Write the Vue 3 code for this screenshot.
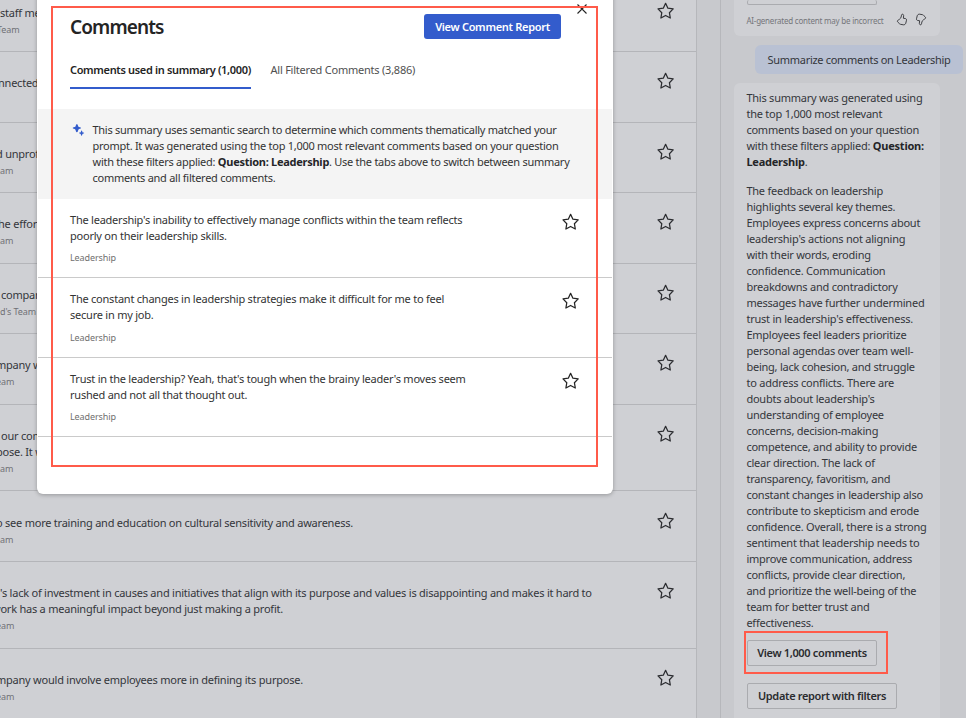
<script setup>
import { h } from 'vue'

const Star = () =>
  h('svg', { class: 'star', viewBox: '0 0 18 18', width: 18, height: 18 }, [
    h('path', {
      d: 'M8.6 1.3 L10.9 6.2 L16.2 6.9 L12.4 10.7 L13.3 16 L8.6 13.5 L3.900 16 L4.800 10.7 L1 6.9 L6.300 6.2 Z',
      fill: 'none',
      stroke: 'currentColor',
      'stroke-width': 1.25,
      'stroke-linejoin': 'round',
    }),
  ])

const rows = [
  { height: 71, lines: [['staff meetings', 0]], team: ['Team', -3] },
  { height: 71, lines: [['nnected', -2]], team: ['', 0] },
  { height: 70, lines: [['d unprofessional', -4]], team: ['eam', -5] },
  { height: 71, lines: [['he effort', -2]], team: ['eam', -5] },
  { height: 70, lines: [['company', 1]], team: ["d's Team", 0] },
  { height: 71, lines: [['mpany would', -4]], team: ['eam', -4] },
  { height: 86, lines: [['our company', 1], ['pose. It would', -4]], team: ['eam', -5] },
  { height: 71, lines: [['o see more training and education on cultural sensitivity and awareness.', -4]], team: ['eam', -5] },
  {
    height: 87,
    lines: [
      ["'s lack of investment in causes and initiatives that align with its purpose and values is disappointing and makes it hard to", 0],
      ['work has a meaningful impact beyond just making a profit.', -8],
    ],
    team: ['eam', -4],
  },
  { height: 90, lines: [['mpany would involve employees more in defining its purpose.', -4]], team: ['eam', -4] },
]

const comments = [
  { height: 79, lines: ["The leadership's inability to effectively manage conflicts within the team reflects", 'poorly on their leadership skills.'] },
  { height: 80, lines: ['The constant changes in leadership strategies make it difficult for me to feel', 'secure in my job.'] },
  { height: 79, lines: ["Trust in the leadership? Yeah, that's tough when the brainy leader's moves seem", 'rushed and not all that thought out.'] },
]

const feedback = [
  'The feedback on leadership',
  'highlights several key themes.',
  'Employees express concerns about',
  "leadership's actions not aligning",
  'with their words, eroding',
  'confidence. Communication',
  'breakdowns and contradictory',
  'messages have further undermined',
  "trust in leadership's effectiveness.",
  'Employees feel leaders prioritize',
  'personal agendas over team well-',
  'being, lack cohesion, and struggle',
  'to address conflicts. There are',
  "doubts about leadership's",
  'understanding of employee',
  'concerns, decision-making',
  'competence, and ability to provide',
  'clear direction. The lack of',
  'transparency, favoritism, and',
  'constant changes in leadership also',
  'contribute to skepticism and erode',
  'confidence. Overall, there is a strong',
  'sentiment that leadership needs to',
  'improve communication, address',
  'conflicts, provide clear direction,',
  'and prioritize the well-being of the',
  'team for better trust and',
  'effectiveness.',
]
</script>

<template>
  <div class="page">
    <main class="list">
      <div v-for="(row, i) in rows" :key="i" class="row" :style="{ height: row.height + 'px' }">
        <div class="row-text">
          <div v-for="(line, j) in row.lines" :key="j" class="line" :style="{ marginLeft: line[1] + 'px' }">{{ line[0] }}</div>
          <div class="team" :style="{ marginLeft: row.team[1] + 'px' }">{{ row.team[0] }}</div>
        </div>
        <Star />
      </div>
    </main>

    <aside class="chat">
      <section class="card previous">
        <div class="outline-btn cut"></div>
        <div class="disclaimer">
          <span>AI-generated content may be incorrect</span>
          <svg class="thumb" viewBox="0 0 12 13" width="12" height="13">
            <path d="M6.6 1.2c.9.2 1.200.9 1 1.800l-.2 2.300 1.700.2c1.100.1 1.600.8 1.400 1.700l-.7 2.900c-.3 1.200-1.300 1.900-2.500 1.700l-2.800-.5c-.5-.1-.9-.4-1.200-.8L1.600 8.900c-.5-.8-.1-1.500.7-1.900 1.700-.9 2.900-1.900 3.200-4.800.1-.7.5-1.100 1.100-1z" />
          </svg>
          <svg class="thumb down" viewBox="0 0 12 13" width="12" height="13">
            <path d="M6.6 1.2c.9.2 1.200.9 1 1.800l-.2 2.300 1.700.2c1.100.1 1.600.8 1.400 1.700l-.7 2.900c-.3 1.200-1.300 1.900-2.500 1.700l-2.800-.5c-.5-.1-.9-.4-1.200-.8L1.600 8.900c-.5-.8-.1-1.500.7-1.900 1.700-.9 2.900-1.900 3.200-4.800.1-.7.5-1.100 1.100-1z" />
          </svg>
        </div>
      </section>
      <div class="prompt"><span>Summarize comments on Leadership</span></div>
      <section class="card answer">
        <p>
          <span class="line">This summary was generated using</span>
          <span class="line">the top 1,000 most relevant</span>
          <span class="line">comments based on your question</span>
          <span class="line">with these filters applied: <b>Question:</b></span>
          <span class="line"><b>Leadership</b>.</span>
        </p>
        <p>
          <span v-for="line in feedback" :key="line" class="line">{{ line }}</span>
        </p>
        <div class="outline-btn view"><span>View 1,000 comments</span><i class="marker"></i></div>
        <div class="outline-btn update"><span>Update report with filters</span></div>
      </section>
    </aside>

    <div class="modal">
      <header>
        <h1>Comments</h1>
        <button class="primary"><span>View Comment Report</span></button>
      </header>
      <svg class="close" viewBox="0 0 12 12" width="12" height="12"><path d="M1.500 1.500 10.500 10.500M10.500 1.500 1.500 10.500" /></svg>
      <nav>
        <div class="tab active"><span>Comments used in summary (1,000)</span></div>
        <div class="tab"><span>All Filtered Comments (3,886)</span></div>
      </nav>
      <div class="notice">
        <svg class="sparkle" viewBox="0 0 14 14" width="14" height="14">
          <path d="M4.900.9C5.900.9 6 3.300 6.500 3.800S9 4.300 9 5.100 7 5.900 6.500 6.400 5.900 9.300 4.900 9.300 3.800 6.900 3.300 6.400.7 5.900.7 5.100 2.800 4.300 3.300 3.800 3.900.9 4.900.9Z" />
          <path d="M9.600 7.600c.7 0 .6 1.300.9 1.600s1.700.3 1.700.9-1.300.6-1.700.9-.2 1.700-.9 1.700-.6-1.300-.9-1.700-1.700-.3-1.700-.9 1.300-.6 1.700-.9.200-1.600.9-1.600Z" />
        </svg>
        <div>
          <span class="line">This summary uses semantic search to determine which comments thematically matched your</span>
          <span class="line">prompt. It was generated using the top 1,000 most relevant comments based on your question</span>
          <span class="line">with these filters applied: <b>Question: Leadership</b>. Use the tabs above to switch between summary</span>
          <span class="line">comments and all filtered comments.</span>
        </div>
      </div>
      <article v-for="(c, i) in comments" :key="i" :style="{ height: c.height + 'px' }">
        <div>
          <span v-for="line in c.lines" :key="line" class="line">{{ line }}</span>
          <div class="topic">Leadership</div>
        </div>
        <Star />
      </article>
      <i class="marker outline"></i>
    </div>
  </div>
</template>

<style>
body { overflow: hidden; }
</style>

<style scoped>
.page {
  position: relative;
  display: flex;
  width: 966px;
  height: 718px;
  overflow: hidden;
  background: #c8c9cd;
  color: #34363b;
  font: 11px/16px "Noto Sans", "Open Sans", sans-serif;
  letter-spacing: -0.23px;
}
.page * { box-sizing: border-box; }
.line { display: block; white-space: pre; }
b { font-weight: 700; color: #242528; }
.list {
  flex: none;
  width: 697px;
  height: 718px;
  margin-right: 23px;
  overflow: hidden;
  background: #cfd0d4;
  border-right: 1px solid #b6b7bb;
}
.row {
  display: flex;
  justify-content: space-between;
  padding: 23px 21px 0 0;
  border-bottom: 1px solid #b4b5b9;
}
.row:first-child { margin-top: -19px; }
.row:first-child, .row:nth-child(8) { padding-top: 24px; }
.row-text { width: 640px; flex: none; }
.team { height: 16px; margin-top: 1px; font-size: 9px; letter-spacing: -0.1px; color: #707176; white-space: pre; }
.star { flex: none; margin: -3px 0 0 0; color: #2b2c30; }
.chat { flex: none; width: 246px; height: 718px; padding-left: 13px; border-left: 1px solid #b6b7bb; }
.card { width: 206px; padding-left: 12px; background: #cfd0d4; border-radius: 6px; }
.previous { height: 36px; border-radius: 0 0 6px 6px; }
.outline-btn {
  position: relative;
  display: flex;
  align-items: center;
  justify-content: center;
  height: 26px;
  margin-left: 1px;
  border: 1px solid #aaabaf;
  border-radius: 2px;
  font-weight: 600;
  color: #2a2b2f;
  letter-spacing: -0.34px;
}
.cut { width: 130px; height: 5px; border-top: 0; }
.disclaimer { display: flex; padding: 8px 0 0 0.4px; font-size: 8px; letter-spacing: -0.22px; color: #75767b; white-space: nowrap; }
.disclaimer span { width: 150px; }
.thumb { fill: none; stroke: #303136; stroke-width: 0.9; }
.down { margin-left: 7px; transform: rotate(180deg); }
.prompt {
  display: flex;
  align-items: center;
  justify-content: center;
  width: 208px;
  height: 29px;
  margin: 9px 0 9px 21px;
  background: #b9c1d3;
  border-radius: 6px;
  white-space: nowrap;
  letter-spacing: -0.3px;
}
.answer { height: 640px; padding-top: 7px; }
.answer p { margin: 0 0 13px 0.4px; }
.answer p + p { margin-bottom: 9px; }
.view { width: 130px; }
.update { width: 150px; margin-top: 17px; }
.marker { position: absolute; inset: -10px -12px -9px -4px; border: 2px solid #ff5b4a; }
.modal {
  position: absolute;
  left: 37px;
  top: -10px;
  width: 576px;
  height: 504px;
  padding: 24px 1px 0;
  background: #fff;
  border-radius: 6px;
  box-shadow: 0 1px 4px rgba(0, 0, 0, 0.28);
}
header { display: flex; justify-content: space-between; height: 25px; padding: 0 51px 0 32px; }
h1 { margin: 0; font: 600 19px/26px "Noto Sans", "Open Sans", sans-serif; color: #242424; letter-spacing: -0.9px; }
.primary {
  width: 137px;
  height: 25px;
  padding: 0;
  border: 0;
  border-radius: 3px;
  background: #335ccc;
  color: #fff;
  font: 600 11px/25px "Noto Sans", "Open Sans", sans-serif;
  letter-spacing: -0.3px;
}
.close { position: absolute; left: 539px; top: 13px; fill: none; stroke: #242424; stroke-width: 1.1; }
nav { display: flex; gap: 19.5px; height: 70px; padding: 23px 0 0 32px; white-space: nowrap; }
.tab { height: 27px; color: #505050; }
.active { width: 181px; border-bottom: 2px solid #335ccc; font-weight: 600; color: #242424; letter-spacing: -0.34px; }
.notice { display: flex; height: 90px; padding: 13px 0 0 33.5px; background: #f4f4f4; letter-spacing: -0.27px; }
.sparkle { flex: none; width: 14px; margin: 1px 7px 0 0; fill: #335ccc; }
article { display: flex; justify-content: space-between; padding: 13px 32px 0 32px; border-bottom: 1px solid #cacaca; }
article .star { margin-top: 1px; color: #242424; }
.topic { margin-top: 6px; font-size: 9px; letter-spacing: -0.1px; color: #707070; }
article:nth-of-type(2) .topic { margin-top: 7px; }
.notice, article { color: #333; }
.outline { inset: 16px 15px 27px 14px; }
</style>
